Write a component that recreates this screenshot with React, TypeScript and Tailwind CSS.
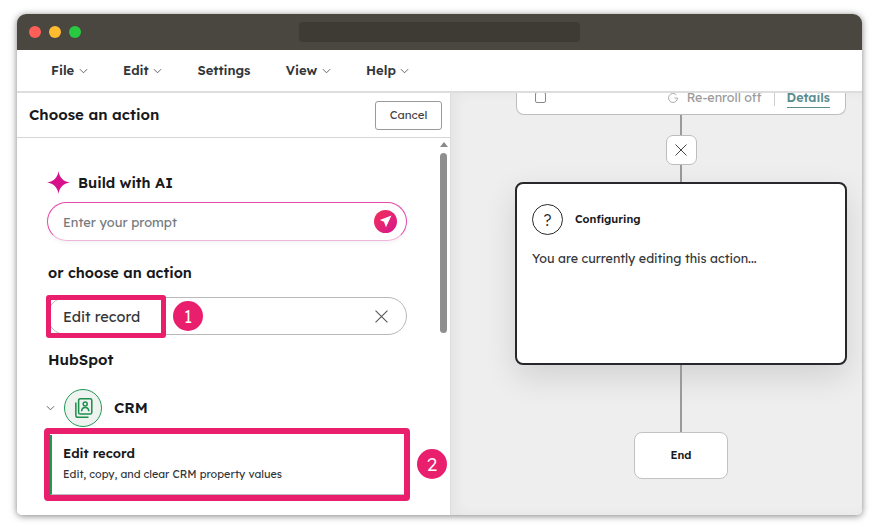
import React from "react";

const font = { fontFamily: '"Lexend Deca", Inter, "Noto Sans", sans-serif' };

function Chevron({ className = "" }: { className?: string }) {
  return (
    <svg viewBox="0 0 10 6" className={"w-[9px] h-[6px] " + className} fill="none" stroke="#555" strokeWidth="1">
      <path d="M1 1l4 4 4-4" />
    </svg>
  );
}

function MenuItem({ label, chevron = true }: { label: string; chevron?: boolean }) {
  return (
    <div className="flex items-center gap-[4.5px]">
      <span className="text-[13px] font-semibold text-[#33363a]">{label}</span>
      {chevron && <Chevron />}
    </div>
  );
}

function Cross({ size, color = "#555" }: { size: number; color?: string }) {
  return (
    <svg width={size} height={size} viewBox="0 0 12 12" fill="none" stroke={color} strokeWidth="1">
      <path d="M0.5 0.5l11 11M11.5 0.5l-11 11" />
    </svg>
  );
}

function Badge({ n, className }: { n: string; className: string }) {
  return (
    <div className={"absolute w-[30px] h-[30px] rounded-full bg-[#e91e6c] text-white text-[19px] flex items-center justify-center font-light " + className}>
      {n}
    </div>
  );
}

function Left() {
  return (
    <div className="w-[434px] shrink-0 border-r border-[#dcdcdc] bg-white flex flex-col">
      <div className="h-[45px] shrink-0 border-b border-[#d5d5d5] flex items-center justify-between pl-3 pr-2">
        <span className="text-[15px] font-semibold text-[#17191c] mt-[1px]">Choose an action</span>
        <div className="w-[67px] h-[29px] border border-[#9a9a9a] rounded-[3px] flex items-center justify-center text-[11.5px] text-[#444]">
          Cancel
        </div>
      </div>
      <div className="relative flex-1 flex min-h-0">
        <div className="flex-1 pl-[30px] pr-[30px] pt-[32px]">
          <div className="flex items-center gap-2 h-[24px]">
            <svg viewBox="0 0 24 24" className="w-[23px] h-[23px]" fill="#d6118a">
              <path d="M12 0C13 7 17 11 24 12 17 13 13 17 12 24 11 17 7 13 0 12 7 11 11 7 12 0Z" />
              <circle cx="12" cy="12" r="5" />
            </svg>
            <span className="text-[14.5px] font-semibold text-[#17191c] mt-[1px]">Build with AI</span>
          </div>
          <div className="mt-[8px] h-[39px] rounded-full border border-[#e44aa8] border-b-[#f0b4da] shadow-[0_2px_4px_rgba(0,0,0,0.05)] flex items-center justify-between pl-[15px] pr-[9px]">
            <span className="text-[12.8px] text-[#75797e] mt-[2px]">Enter your prompt</span>
            <div className="w-[23px] h-[23px] rounded-full bg-gradient-to-br from-[#f42c52] to-[#d4128f] flex items-center justify-center">
              <svg viewBox="0 0 12 12" className="w-[13px] h-[13px]" fill="white">
                <path d="M11.5 0.5L0.8 4.6 4.6 6.2 6.4 11.3Z" />
              </svg>
            </div>
          </div>
          <div className="mt-[22px] ml-px h-[20px] flex items-center text-[14.5px] font-semibold text-[#17191c]">or choose an action</div>
          <div className="mt-[14px] h-[38px] rounded-full border border-[#b9b9b9] flex items-center justify-between pl-[15px] pr-[18px]">
            <span className="text-[14.5px] text-[#33363a] mt-[1px]">Edit record</span>
            <Cross size={13} />
          </div>
          <div className="mt-[15px] ml-px h-[20px] flex items-center text-[15px] font-semibold text-[#17191c]">HubSpot</div>
          <div className="mt-[19px] flex items-center h-[38px]">
            <Chevron className="ml-[-1px]" />
            <div className="ml-[9px] w-[38px] h-[38px] rounded-full border-[1.5px] border-[#1f9a55] bg-[#eef3f0] flex items-center justify-center">
              <svg viewBox="0 0 20 20" className="w-[22px] h-[22px]" fill="none" stroke="#1f8f4e" strokeWidth="1.4">
                <rect x="6" y="1.5" width="12" height="14" rx="1.5" />
                <path d="M3.5 5v11.5a2 2 0 0 0 2 2H15" />
                <circle cx="12" cy="6.3" r="1.8" />
                <path d="M8.7 13c.2-2.4 1.5-3.4 3.3-3.4s3.1 1 3.3 3.4" />
              </svg>
            </div>
            <span className="ml-3 text-[15px] font-semibold text-[#17191c]">CRM</span>
          </div>
          <div className="mt-[8px] ml-[3px] mr-[-3px] h-[60px] border-l-2 border-[#1f9a55] border-b border-b-[#bbb] pl-[11px] pt-[9px]">
            <div className="text-[13px] font-semibold text-[#17191c] leading-[18px]">Edit record</div>
            <div className="mt-[4px] text-[10.8px] text-[#33363a] leading-[16px]">Edit, copy, and clear CRM property values</div>
          </div>
        </div>
        <div className="w-[13px] shrink-0 flex flex-col items-center pt-[4px]">
          <div className="w-0 h-0 border-x-[4px] border-x-transparent border-b-[5px] border-b-[#8a8a8a]" />
          <div className="mt-[6px] w-[7px] h-[180px] rounded-full bg-[#8f8f8f]" />
        </div>
        <div className="absolute left-[29px] top-[157px] w-[120px] h-[43px] border-[5px] border-[#e91e6c] rounded-[3px]" />
        <Badge n="1" className="left-[156px] top-[163px]" />
        <div className="absolute left-[27px] top-[290px] w-[366px] h-[73px] border-[6px] border-[#e91e6c] rounded-[4px]" />
        <Badge n="2" className="left-[400px] top-[311px]" />
      </div>
    </div>
  );
}

function Line({ h }: { h: number }) {
  return <div className="w-[2px] bg-[#9a9a9a] shrink-0" style={{ height: h }} />;
}

function Right() {
  return (
    <div className="flex-1 bg-[#eeeeee] overflow-hidden pl-[64px] shadow-[inset_6px_0_12px_rgba(0,0,0,0.04)]">
      <div className="w-[332px] flex flex-col items-center">
        <div className="w-[330px] h-[22px] bg-white border border-t-0 border-[#bdbdbd] rounded-b-[8px] overflow-hidden flex items-start justify-between pl-[18px] pr-[15px]">
          <div className="w-[11px] h-[11px] mt-[-1px] border border-[#8a8a8a] rounded-[2px] shrink-0" />
          <div className="flex items-start text-[12.5px] leading-[10px] text-[#9a9a9a] mt-[-1px]">
            <svg viewBox="0 0 12 12" className="w-[12px] h-[12px] mr-[8px]" fill="none" stroke="#aaa" strokeWidth="1">
              <path d="M10.5 6a4.5 4.5 0 1 1-1.3-3.2M10.5 6H7.5" />
            </svg>
            <span>Re-enroll off</span>
            <div className="w-px h-[14px] bg-[#ccc] mx-[12px]" />
            <span className="font-semibold text-[#5b8d90] border-b border-[#5b8d90] h-[16px] leading-[10px]">Details</span>
          </div>
        </div>
        <Line h={20} />
        <div className="w-[31px] h-[30px] bg-white border border-[#bdbdbd] rounded-[7px] flex items-center justify-center shrink-0">
          <Cross size={12} color="#444" />
        </div>
        <Line h={17} />
        <div className="w-[332px] h-[183px] shrink-0 bg-white border-2 border-[#26282b] rounded-[8px] shadow-[0_12px_32px_rgba(0,0,0,0.12)] px-[15px] pt-[20px]">
          <div className="flex items-center">
            <div className="w-[31px] h-[31px] rounded-full border border-[#26282b] flex items-center justify-center text-[16px] font-light text-[#26282b]">?</div>
            <span className="ml-[12px] text-[11px] font-semibold text-[#17191c]">Configuring</span>
          </div>
          <div className="mt-[14px] text-[12.5px] text-[#33363a] leading-[18px]">You are currently editing this action...</div>
        </div>
        <Line h={67} />
        <div className="w-[94px] h-[47px] shrink-0 bg-white border border-[#c2c2c2] rounded-[8px] flex items-center justify-center text-[11px] font-semibold text-[#17191c]">End</div>
      </div>
    </div>
  );
}

export default function App() {
  return (
    <div className="w-[879px] h-[529px] bg-white overflow-hidden pt-[14px] pl-[17px]" style={font}>
      <div className="w-[845px] h-[501px] rounded-t-[9px] rounded-b-[5px] overflow-hidden flex flex-col bg-white shadow-[0_1px_7px_rgba(0,0,0,0.5)]">
        <div className="h-[36px] shrink-0 bg-[#4a4640] relative flex items-center pl-[12px] gap-2">
          <div className="w-[12px] h-[12px] rounded-full bg-[#ff5f57]" />
          <div className="w-[12px] h-[12px] rounded-full bg-[#febc2e]" />
          <div className="w-[12px] h-[12px] rounded-full bg-[#28c840]" />
          <div className="ml-[210px] w-[281px] h-[20px] rounded-[4px] bg-[#3e3a34]" />
        </div>
        <div className="h-[43px] shrink-0 border-b-2 border-[#dddddd] flex items-center gap-[35.3px] pl-[34px]">
          <MenuItem label="File" />
          <MenuItem label="Edit" />
          <MenuItem label="Settings" chevron={false} />
          <MenuItem label="View" />
          <MenuItem label="Help" />
        </div>
        <div className="flex-1 flex min-h-0">
          <Left />
          <Right />
        </div>
      </div>
    </div>
  );
}
